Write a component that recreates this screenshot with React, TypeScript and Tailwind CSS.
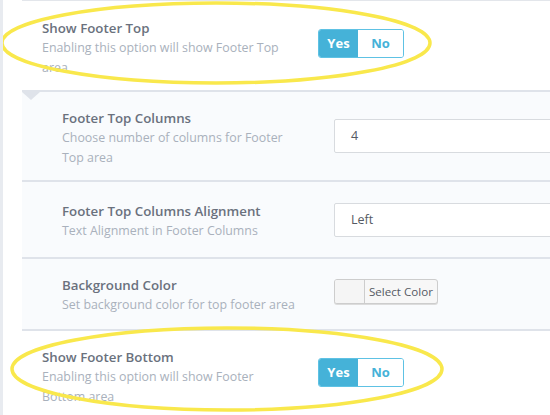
const font = { fontFamily: '"Open Sans", "Liberation Sans", sans-serif' };

function Label({ title, desc, width }: { title: string; desc: string; width: string }) {
  return (
    <div className={`${width} shrink-0`}>
      <div className="text-[13.3px] leading-[20px] font-semibold text-[#6a717d]">{title}</div>
      <div className="text-[12.4px] leading-[20px] text-[#a9b1bc]">{desc}</div>
    </div>
  );
}

function Toggle() {
  return (
    <div className="flex h-[29px] rounded-[3px] border border-[#5ec2e4] overflow-hidden text-[13px] font-bold">
      <span className="w-[39px] bg-[#45b2d8] text-white flex items-center justify-center">Yes</span>
      <span className="w-[45px] bg-white text-[#45b2d8] flex items-center justify-center">No</span>
    </div>
  );
}

function TextBox({ value }: { value: string }) {
  return (
    <div className="w-[240px] h-[34px] shrink-0 bg-white border border-[#d8dbdf] rounded-[2px] pl-[16px] flex items-center text-[12.5px] text-[#555a63]">
      {value}
    </div>
  );
}

export default function App() {
  return (
    <div
      className="relative w-[550px] h-[415px] overflow-hidden bg-white border-l-[3px] border-[#e8ebf0] pl-[19px]"
      style={font}
    >
      <div className="border-t border-[#e3e6eb]">
        {/* Show Footer Top */}
        <div className="flex items-start h-[91px] pt-[17px] pl-[20px] border-b-2 border-[#dfe3ea]">
          <Label
            title="Show Footer Top"
            desc="Enabling this option will show Footer Top area"
            width="w-[276px] pr-[26px]"
          />
          <div className="mt-[11px]">
            <Toggle />
          </div>
        </div>

        {/* sub options */}
        <div className="relative bg-[#f9fbfd]">
          <div className="absolute left-0 top-0 w-0 h-0 border-l-[9px] border-r-[9px] border-t-[8px] border-l-transparent border-r-transparent border-t-[#dfe3ea]" />

          <div className="flex items-start h-[90px] pt-[16px] pl-[40px] border-b-2 border-[#dfe3ea]">
            <Label
              title="Footer Top Columns"
              desc="Choose number of columns for Footer Top area"
              width="w-[272px] pr-[32px]"
            />
            <div className="mt-[11px]">
              <TextBox value="4" />
            </div>
          </div>

          <div className="flex items-start h-[77px] pt-[19px] pl-[40px] border-b-2 border-[#dfe3ea]">
            <Label
              title="Footer Top Columns Alignment"
              desc="Text Alignment in Footer Columns"
              width="w-[272px] pr-[32px]"
            />
            <div className="mt-[2px]">
              <TextBox value="Left" />
            </div>
          </div>

          <div className="flex items-start h-[72px] pt-[16px] pl-[40px] border-b-2 border-[#dfe3ea]">
            <Label
              title="Background Color"
              desc="Set background color for top footer area"
              width="w-[272px] pr-[32px]"
            />
            <div className="mt-[4px] flex h-[25px] rounded-[3px] border border-[#cdcdcd] shadow-[0_1px_0_#dcdcdc] overflow-hidden bg-[#f7f7f7] text-[11.6px] text-[#555a63]">
              <span className="w-[30px] border-r border-[#cdcdcd] bg-[#f5f5f5]" />
              <span className="px-[4px] flex items-center">Select Color</span>
            </div>
          </div>
        </div>

        {/* Show Footer Bottom */}
        <div className="flex items-start h-[90px] pt-[16px] pl-[20px]">
          <Label
            title="Show Footer Bottom"
            desc="Enabling this option will show Footer Bottom area"
            width="w-[276px] pr-[26px]"
          />
          <div className="mt-[11px]">
            <Toggle />
          </div>
        </div>
      </div>

      {/* highlight annotations */}
      <svg className="absolute left-0 top-0 pointer-events-none" width="550" height="415">
        <ellipse cx="213" cy="43" rx="214" ry="40" fill="none" stroke="#f9e84c" strokeWidth="3.5" />
        <ellipse cx="224" cy="369" rx="215" ry="41" fill="none" stroke="#f9e84c" strokeWidth="3.5" />
      </svg>
    </div>
  );
}
